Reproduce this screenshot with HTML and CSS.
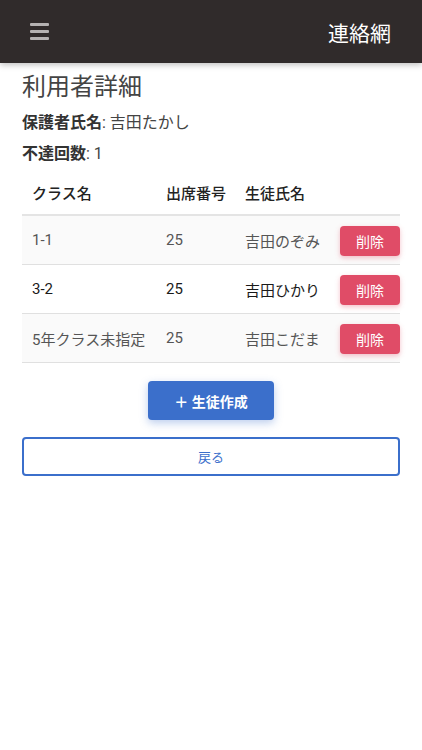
FILE: index.html
```html
<!DOCTYPE html>
<html lang="ja">
  <head>
    <meta charset="UTF-8" />
    <meta name="viewport" content="width=device-width, initial-scale=1.0" />
    <title>利用者詳細</title>
    <link rel="stylesheet" href="styles.css">
  </head>
  <body>
    <header class="appbar">
      <button class="menu-btn" aria-label="menu">
        <span></span><span></span><span></span>
      </button>
      <div class="appbar-title">連絡網</div>
    </header>

    <main class="container">
      <h1>利用者詳細</h1>
      <p class="info"><b>保護者氏名</b>: 吉田たかし</p>
      <p class="info"><b>不達回数</b>: 1</p>

      <table class="students">
        <colgroup>
          <col class="c-class">
          <col class="c-no">
          <col class="c-name">
          <col class="c-act">
        </colgroup>
        <thead>
          <tr>
            <th>クラス名</th>
            <th>出席番号</th>
            <th>生徒氏名</th>
            <th></th>
          </tr>
        </thead>
        <tbody>
          <tr class="striped">
            <td>1-1</td>
            <td>25</td>
            <td>吉田のぞみ</td>
            <td class="act"><button class="btn-delete">削除</button></td>
          </tr>
          <tr class="active">
            <td>3-2</td>
            <td>25</td>
            <td>吉田ひかり</td>
            <td class="act"><button class="btn-delete">削除</button></td>
          </tr>
          <tr class="striped">
            <td>5年クラス未指定</td>
            <td>25</td>
            <td>吉田こだま</td>
            <td class="act"><button class="btn-delete">削除</button></td>
          </tr>
        </tbody>
      </table>

      <div class="actions">
        <button class="btn-create">＋ 生徒作成</button>
      </div>
      <button class="btn-back">戻る</button>
    </main>
  </body>
</html>
```

FILE: styles.css
```css
body {
  font-family: Roboto, "Noto Sans CJK JP", sans-serif;
  background: #ffffff;
  color: #444;
  margin: 0;
}

.appbar {
  height: 63px;
  background: #302b2b;
  display: flex;
  align-items: center;
  justify-content: space-between;
  padding: 0 31px 0 30px;
  box-shadow: 0 2px 6px rgba(0, 0, 0, 0.25);
}

.menu-btn {
  background: none;
  border: none;
  padding: 0;
  width: 19px;
  display: flex;
  flex-direction: column;
  gap: 4px;
}

.menu-btn span {
  display: block;
  height: 3px;
  border-radius: 1px;
  background: #b5b2b2;
}

.appbar-title {
  color: #fff;
  font-size: 21px;
  font-weight: 400;
}

.container {
  padding: 8px 22px;
}

h1 {
  font-size: 24px;
  font-weight: 400;
  color: #444;
  margin: 0 0 9px;
  line-height: 32px;
}

.info {
  font-size: 16px;
  margin: 0 0 9px;
  line-height: 22px;
  color: #444;
}

.info b {
  font-weight: 700;
  color: #333;
}

.students {
  width: 100%;
  table-layout: fixed;
  border-collapse: collapse;
  margin-top: 10px;
  font-size: 15px;
}

.c-class { width: 134px; }
.c-no { width: 79px; }
.c-name { width: 95px; }
.c-act { width: 70px; }

th, td {
  padding: 0 10px;
  text-align: left;
  white-space: nowrap;
}

th {
  height: 35px;
  padding-bottom: 4px;
  font-size: 15px;
  font-weight: 500;
  color: #222;
  border-bottom: 2px solid #e4e4e4;
}

td {
  height: 48px;
  color: #555;
  border-bottom: 1px solid #e0e0e0;
}

td.act {
  padding: 0;
  text-align: right;
}

.striped td {
  background: #fafafa;
}

.active td {
  color: #1a1a1a;
}

.btn-delete {
  width: 60px;
  height: 30px;
  border: none;
  border-radius: 4px;
  background: #e04c67;
  color: #fff;
  font-family: inherit;
  font-size: 14px;
  box-shadow: 0 2px 5px rgba(224, 76, 103, 0.35);
  margin-top: 2px;
}

.actions {
  display: flex;
  justify-content: center;
  margin-top: 18px;
}

.btn-create {
  width: 126px;
  height: 39px;
  border: none;
  border-radius: 4px;
  background: #3b6fcb;
  color: #fff;
  font-family: inherit;
  font-size: 14px;
  font-weight: 700;
  box-shadow: 0 3px 8px rgba(59, 111, 203, 0.35);
}

.btn-back {
  display: block;
  width: 100%;
  height: 39px;
  margin-top: 17px;
  border: 2px solid #3b6fcb;
  border-radius: 4px;
  background: #fff;
  color: #3b6fcb;
  font-family: inherit;
  font-size: 13px;
}
```
